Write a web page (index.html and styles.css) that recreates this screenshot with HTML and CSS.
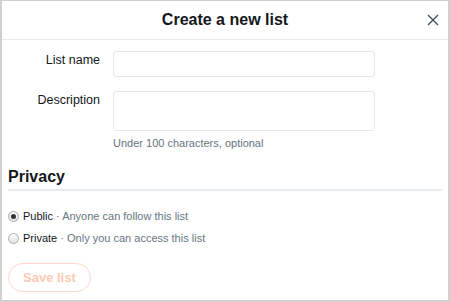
FILE: index.html
```html
<!DOCTYPE html>
<html>
<head>
  <title>Create a new list</title>
  <link rel="stylesheet" href="styles.css">
</head>
<body>
  <div class="dialog">
    <div class="header">
      <h1 class="title">Create a new list</h1>
      <button class="close" aria-label="Close">
        <svg width="12" height="12" viewBox="0 0 12 12"><path d="M1 1L11 11M11 1L1 11" stroke="#3d4f60" stroke-width="1.4" fill="none"/></svg>
      </button>
    </div>
    <div class="body">
      <div class="field">
        <label class="label" for="name">List name</label>
        <div class="control"><input id="name" class="input" type="text"></div>
      </div>
      <div class="field">
        <label class="label" for="desc">Description</label>
        <div class="control">
          <textarea id="desc" class="input textarea"></textarea>
          <div class="help">Under 100 characters, optional</div>
        </div>
      </div>
      <h2 class="section">Privacy</h2>
      <div class="options">
        <label class="option"><input class="radio" type="radio" name="mode" checked><span>Public <span class="muted">&middot; Anyone can follow this list</span></span></label>
        <label class="option"><input class="radio" type="radio" name="mode"><span>Private <span class="muted">&middot; Only you can access this list</span></span></label>
      </div>
      <button class="save" disabled>Save list</button>
    </div>
  </div>
</body>
</html>
```
FILE: styles.css
```css
html, body {
  margin: 0;
  height: 100%;
}
body {
  font-family: 'Liberation Sans', Arial, sans-serif;
  color: #14171a;
  background: #fff;
}
.dialog {
  box-sizing: border-box;
  height: 302px;
  border: 2px solid #cfcfcf;
  border-top-width: 1px;
  background: #fff;
}
.header {
  height: 38px;
  border-bottom: 1px solid #e6ecf0;
  display: flex;
  align-items: center;
  justify-content: center;
  position: relative;
}
.title {
  margin: 0;
  font-size: 16px;
  font-weight: bold;
}
.close {
  position: absolute;
  right: 4px;
  top: 8px;
  width: 22px;
  height: 22px;
  border: none;
  background: none;
  padding: 0;
  display: flex;
  align-items: center;
  justify-content: center;
}
.body {
  padding: 11px 6px 0 6px;
}
.field {
  display: flex;
  margin-bottom: 14px;
}
.label {
  width: 92px;
  text-align: right;
  font-size: 12.5px;
  padding-top: 2px;
  color: #14171a;
}
.control {
  margin-left: 13px;
}
.input {
  display: block;
  box-sizing: border-box;
  width: 262px;
  height: 26px;
  border: 1px solid #e1e8ed;
  border-radius: 3px;
  margin: 0;
  font: inherit;
}
.textarea {
  height: 40px;
  resize: none;
}
.help {
  margin-top: 6px;
  font-size: 11px;
  color: #66757f;
}
.section {
  margin: 19px 0 0;
  padding-bottom: 3px;
  font-size: 16px;
  font-weight: bold;
  border-bottom: 2px solid #e6ecf0;
}
.options {
  margin-top: 14px;
}
.option {
  display: flex;
  align-items: center;
  font-size: 11px;
  height: 22px;
}
.radio {
  appearance: none;
  -webkit-appearance: none;
  box-sizing: border-box;
  width: 11px;
  height: 11px;
  margin: 0 4px 0 0;
  border: 1px solid #a9a9a9;
  border-radius: 50%;
  background: linear-gradient(#fdfdfd, #e3e3e3);
  display: flex;
  align-items: center;
  justify-content: center;
}
.radio:checked::after {
  content: '';
  width: 5px;
  height: 5px;
  border-radius: 50%;
  background: #333;
}
.muted {
  color: #66757f;
}
.save {
  margin-top: 14px;
  height: 29px;
  padding: 0 14px;
  border: 1px solid #fdd8c8;
  border-radius: 15px;
  background: #fff;
  color: #fdc9b4;
  font: bold 13px 'Liberation Sans', Arial, sans-serif;
}
```
